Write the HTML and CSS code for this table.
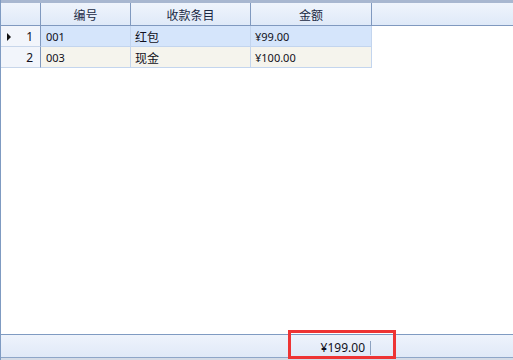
FILE: index.html
```html
<!DOCTYPE html>
<html>
<head>
<meta charset="utf-8">
<link rel="stylesheet" href="styles.css">
</head>
<body>
<div class="grid">
  <div class="topband"></div>
  <div class="row head">
    <div class="cell rh"></div>
    <div class="cell c1">编号</div>
    <div class="cell c2">收款条目</div>
    <div class="cell c3">金额</div>
    <div class="fill"></div>
  </div>
  <div class="row data current">
    <div class="cell rh"><span class="arrow"></span><span class="num">1</span></div>
    <div class="cell c1">001</div>
    <div class="cell c2">红包</div>
    <div class="cell c3">¥99.00</div>
  </div>
  <div class="row data alt">
    <div class="cell rh"><span class="num">2</span></div>
    <div class="cell c1">003</div>
    <div class="cell c2">现金</div>
    <div class="cell c3">¥100.00</div>
  </div>
  <div class="body"></div>
  <div class="footer">
    <div class="ftotal">¥199.00</div>
    <div class="fsep"></div>
  </div>
  <div class="bottom"></div>
  <div class="mark"></div>
</div>
</body>
</html>
```
FILE: styles.css
```css
html, body {
  margin: 0;
  padding: 0;
  background: #ffffff;
}
body {
  width: 513px;
  height: 360px;
  overflow: hidden;
  font-family: "Noto Sans", "Noto Sans CJK SC", sans-serif;
  font-size: 11px;
  color: #101020;
}
.grid {
  position: relative;
  height: 360px;
  display: flex;
  flex-direction: column;
  border-left: 1px solid #7f9bc2;
  box-sizing: border-box;
}
.topband {
  height: 3px;
  background: #a8b7d0;
  flex: none;
}
.row {
  display: flex;
  flex: none;
}
.cell {
  box-sizing: border-box;
  display: flex;
  align-items: center;
  white-space: nowrap;
}
.rh { width: 40px; }
.c1 { width: 90px; }
.c2 { width: 120px; }
.c3 { width: 121px; }

.head {
  height: 23px;
  background: linear-gradient(#eff4fc, #dfe9f8);
  border-bottom: 1px solid #8099bf;
  box-sizing: border-box;
}
.head .cell {
  border-right: 1px solid #8099bf;
  justify-content: center;
  font-family: "Noto Sans CJK SC", sans-serif;
  font-size: 12px;
  color: #1a2a44;
  padding-top: 1px;
}
.head .fill { flex: 1; }

.data {
  height: 21px;
}
.data .cell {
  border-right: 1px solid #c3d5ee;
  border-bottom: 1px solid #c3d5ee;
  padding-left: 4px;
  padding-top: 1px;
}
.data .c2 {
  font-family: "Noto Sans CJK SC", sans-serif;
  font-size: 12px;
}
.data .c1 { padding-left: 5px; }
.data .rh {
  background: #f2f5fb;
  border-right: 1px solid #8099bf;
  border-bottom: 1px solid #c8d6ea;
  justify-content: flex-end;
  padding-right: 7px;
  position: relative;
  font-size: 12px;
}
.current .cell:not(.rh) { background: #d5e5fb; }
.alt .cell:not(.rh) { background: #f5f4ed; }

.arrow {
  position: absolute;
  left: 6px;
  top: 7px;
  width: 0;
  height: 0;
  border-top: 4px solid transparent;
  border-bottom: 4px solid transparent;
  border-left: 4px solid #101010;
}

.body {
  flex: 1;
  background: #ffffff;
}
.footer {
  flex: none;
  height: 24px;
  box-sizing: border-box;
  border-top: 1px solid #7f9bc2;
  border-bottom: 1px solid #8ea6c8;
  background: linear-gradient(#eef3fc, #e0e9f7);
  display: flex;
  align-items: center;
  padding-left: 319px;
}
.ftotal {
  font-size: 12px;
  width: 45px;
  text-align: right;
  padding-top: 3px;
}
.fsep {
  width: 1px;
  height: 14px;
  margin-left: 5px;
  margin-top: 3px;
  background: #8da2c0;
}
.bottom {
  flex: none;
  height: 2px;
  background: #d4dbe6;
}
.mark {
  position: absolute;
  left: 287px;
  top: 330px;
  width: 108px;
  height: 29px;
  box-sizing: border-box;
  border: 3px solid #ee3434;
}
```
